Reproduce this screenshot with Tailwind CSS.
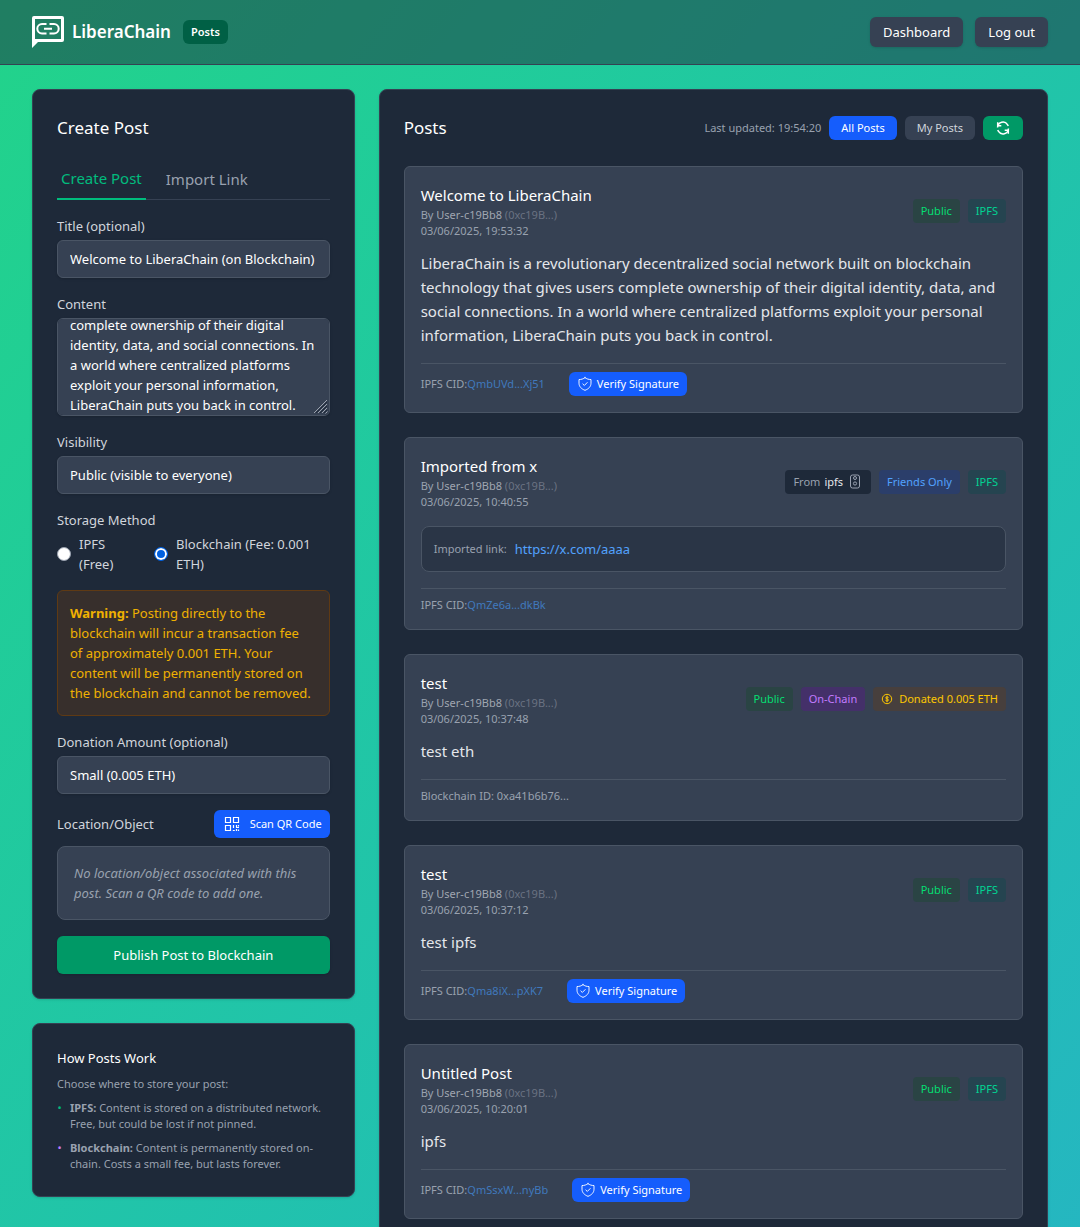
<!DOCTYPE html>
<html lang="en">
<head>
<meta charset="utf-8">
<meta name="viewport" content="width=device-width, initial-scale=1">
<title>LiberaChain – Posts</title>
<script src="https://cdn.jsdelivr.net/npm/@tailwindcss/browser@4"></script>
</head>
<body class="min-h-screen bg-linear-to-br from-[#22d38a] to-[#25b6c1] font-['Noto_Sans','Open_Sans',sans-serif] text-[15px] leading-6 text-white">

<svg class="hidden" aria-hidden="true">
  <symbol id="shield" viewBox="0 0 24 24" fill="none" stroke="currentColor" stroke-width="1.400" stroke-linejoin="round" stroke-linecap="round">
    <path d="M12 2.500c2.600 2 5.600 2.800 9 2.800v5.500c0 5-3.600 8.600-9 10.700-5.400-2.100-9-5.700-9-10.700V5.300c3.400 0 6.400-.8 9-2.800z"/>
    <path d="M8.800 12l2.200 2.200 4.300-4.400"/>
  </symbol>
</svg>

<header class="border-b border-gray-700 bg-gray-800/50">
  <div class="flex h-16 items-center justify-between px-8">
    <div class="flex items-center gap-3">
      <a href="#" class="flex items-center gap-2">
        <svg class="size-8" viewBox="0 0 32 32" fill="none" stroke="#fff">
          <path d="M2 0h28a2 2 0 0 1 2 2v22a2 2 0 0 1-2 2H6l-6 6V2a2 2 0 0 1 2-2zM3 3v20h26V3z" fill="#fff" stroke="none" fill-rule="evenodd"/>
          <path d="M14.500 8H10a4.700 4.700 0 0 0 0 9.400h4.500M17.500 8H22a4.700 4.700 0 0 1 0 9.400h-4.500M12 12.700h8" stroke-width="2"/>
        </svg>
        <span class="text-[17px] font-semibold">LiberaChain</span>
      </a>
      <span class="rounded-md bg-emerald-800 px-2 py-1 text-[11px] leading-4 font-semibold">Posts</span>
    </div>
    <nav class="flex gap-3">
      <button type="button" class="h-[30px] rounded-md bg-gray-700 px-[13px] text-[13px] shadow-sm">Dashboard</button>
      <button type="button" class="h-[30px] rounded-md bg-gray-700 px-[13px] text-[13px] shadow-sm">Log out</button>
    </nav>
  </div>
</header>

<main class="grid grid-cols-3 items-start gap-6 px-8 py-6">

  <aside class="flex flex-col gap-6">
    <section class="rounded-lg border border-gray-700 bg-gray-800 p-6 shadow-sm">
      <h2 class="text-[17px] leading-7">Create Post</h2>
      <div class="mt-6 flex gap-4 border-b border-gray-700">
        <button type="button" class="-mb-px border-b-2 border-emerald-500 px-1 pb-2 text-emerald-500">Create Post</button>
        <button type="button" class="px-1 pb-2 text-gray-400">Import Link</button>
      </div>

      <form class="mt-4 flex flex-col gap-4 text-[13px] leading-5">
        <div class="flex flex-col gap-1">
          <label for="title" class="text-gray-300">Title (optional)</label>
          <input id="title" type="text" value="Welcome to LiberaChain (on Blockchain)" class="w-full rounded-md border border-gray-600 bg-gray-700 px-3 py-2 shadow-sm">
        </div>
        <div class="flex flex-col gap-1">
          <label for="content" class="text-gray-300">Content</label>
          <div class="relative flex">
            <textarea id="content" class="h-[98px] w-full resize-none rounded-md border border-gray-600 bg-gray-700 px-3 pt-2 pb-0 shadow-sm [scrollbar-width:none]">LiberaChain is a revolutionary decentralized social network built on blockchain technology that gives users complete ownership of their digital identity, data, and social connections. In a world where centralized platforms exploit your personal information, LiberaChain puts you back in control.</textarea>
            <svg class="pointer-events-none absolute right-0.5 bottom-0.5 size-3.5" viewBox="0 0 14 14" fill="none" aria-hidden="true">
              <path d="M0 13L13 0M4 13l9-9M8 13l5-5M11.500 13.500l2-2" stroke="#9ca3af"/>
              <path d="M2 13L13 2M6 13l7-7M10 13l3-3" stroke="#1e2939"/>
            </svg>
          </div>
        </div>
        <div class="flex flex-col gap-1">
          <label for="visibility" class="text-gray-300">Visibility</label>
          <select id="visibility" class="w-full appearance-none rounded-md border border-gray-600 bg-gray-700 px-3 py-2 shadow-sm">
            <option>Public (visible to everyone)</option>
            <option>Friends Only</option>
          </select>
        </div>
        <fieldset class="text-gray-300">
          <legend class="mb-1">Storage Method</legend>
          <div class="grid grid-cols-[73px_1fr] gap-6">
            <label class="flex items-center gap-2">
              <input type="radio" name="storage" class="size-[14px] shrink-0 appearance-none rounded-full border border-gray-400 bg-white">
              <span>IPFS (Free)</span>
            </label>
            <label class="flex items-center gap-2">
              <input type="radio" name="storage" checked class="size-[14px] shrink-0 appearance-none rounded-full border border-[#0060df] bg-[#0060df] inset-ring-2 inset-ring-white">
              <span>Blockchain (Fee: 0.001 ETH)</span>
            </label>
          </div>
        </fieldset>
        <p class="rounded-md border border-[#5f3a14] bg-[#372f2c] py-3 pr-4 pl-3 text-yellow-500"><strong class="font-bold">Warning:</strong> Posting directly to the blockchain will incur a transaction fee of approximately 0.001 ETH. Your content will be permanently stored on the blockchain and cannot be removed.</p>
        <div class="flex flex-col gap-1">
          <label for="donation" class="text-gray-300">Donation Amount (optional)</label>
          <select id="donation" class="w-full appearance-none rounded-md border border-gray-600 bg-gray-700 px-3 py-2 shadow-sm">
            <option>Small (0.005 ETH)</option>
          </select>
        </div>
        <div class="flex flex-col gap-2">
          <div class="flex items-center justify-between">
            <span class="text-gray-300">Location/Object</span>
            <button type="button" class="flex h-7 items-center gap-2 rounded-md bg-blue-600 px-2 text-[11px]">
              <svg class="size-5" viewBox="0 0 20 20" fill="none" stroke="currentColor" stroke-width="1.200">
                <path d="M3.500 3.500h5v5h-5zM11.500 3.500h5v5h-5zM3.500 11.500h5v5h-5z"/>
                <path d="M11.500 11v3M14.500 11v2.500M16.500 11v1.500M14 13.500h3M10.800 16.500h2M14.500 15v2M16.500 15.500v1.500"/>
              </svg>
              Scan QR Code
            </button>
          </div>
          <p class="rounded-lg border border-gray-600 bg-gray-700 p-4 text-gray-400 italic">No location/object associated with this post. Scan a QR code to add one.</p>
        </div>
        <button type="submit" class="h-[38px] w-full rounded-md bg-emerald-600 shadow-sm">Publish Post to Blockchain</button>
      </form>
    </section>

    <section class="rounded-lg border border-gray-700 bg-gray-800 p-6 text-[11px] leading-4 text-gray-400 shadow-sm">
      <h3 class="text-[13px] leading-5 text-white">How Posts Work</h3>
      <p class="mt-2">Choose where to store your post:</p>
      <ul class="mt-2 flex flex-col gap-2">
        <li class="flex gap-2"><span class="w-[5px] shrink-0 text-center text-emerald-500">•</span><span><strong class="font-bold">IPFS:</strong> Content is stored on a distributed network. Free, but could be lost if not pinned.</span></li>
        <li class="flex gap-2"><span class="w-[5px] shrink-0 text-center text-purple-400">•</span><span><strong class="font-bold">Blockchain:</strong> Content is permanently stored on-chain. Costs a small fee, but lasts forever.</span></li>
      </ul>
    </section>
  </aside>

  <section class="col-span-2 rounded-lg border border-gray-700 bg-gray-800 p-6 shadow-sm">
    <div class="flex items-center justify-between">
      <h2 class="text-[17px] leading-7">Posts</h2>
      <div class="flex items-center gap-2 text-[11px] leading-4">
        <span class="text-gray-400">Last updated: 19:54:20</span>
        <button type="button" class="rounded-md bg-blue-600 px-3 py-1">All Posts</button>
        <button type="button" class="rounded-md bg-gray-700 px-3 py-1 text-gray-300">My Posts</button>
        <button type="button" aria-label="Refresh posts" class="rounded-md bg-emerald-600 px-3 py-1">
          <svg class="size-4" viewBox="0 0 16 16" fill="none" stroke="currentColor" stroke-width="1.500">
            <path d="M2.600 7.600V7a5.400 5.400 0 0 1 9.900-2.400L13.300 6M13.400 8.400V9a5.400 5.400 0 0 1-9.900 2.400L2.700 10"/>
            <path d="M2.700 2.300v3.400h3.600M13.300 13.700v-3.400H9.700"/>
          </svg>
        </button>
      </div>
    </div>

    <div class="mt-6 flex flex-col gap-6">

      <article class="rounded-md border border-gray-600 bg-gray-700 p-4">
        <div class="flex items-center justify-between text-[11px] leading-4">
          <div class="text-gray-400">
            <h3 class="text-[15px] leading-6 text-white">Welcome to LiberaChain</h3>
            <p>By <span class="text-gray-300/70">User-c19Bb8</span> <span class="text-gray-500">(0xc19B...)</span></p>
            <p>03/06/2025, 19:53:32</p>
          </div>
          <div class="flex gap-2">
            <span class="rounded bg-[#2a4444] px-2 py-1 text-green-400">Public</span>
            <span class="rounded bg-[#254450] px-2 py-1 text-emerald-400">IPFS</span>
          </div>
        </div>
        <p class="mt-3 text-gray-200">LiberaChain is a revolutionary decentralized social network built on blockchain technology that gives users complete ownership of their digital identity, data, and social connections. In a world where centralized platforms exploit your personal information, LiberaChain puts you back in control.</p>
        <div class="mt-4 flex items-center gap-6 border-t border-gray-600 pt-2 text-[11px] leading-4">
          <span class="text-gray-400">IPFS CID:<a href="#" class="text-[#4079bd]">QmbUVd...Xj51</a></span>
          <button type="button" class="flex items-center gap-1 rounded-md bg-blue-600 px-2 py-1"><svg class="size-4"><use href="#shield"/></svg>Verify Signature</button>
        </div>
      </article>

      <article class="rounded-md border border-gray-600 bg-gray-700 p-4">
        <div class="flex items-center justify-between text-[11px] leading-4">
          <div class="text-gray-400">
            <h3 class="text-[15px] leading-6 text-white">Imported from x</h3>
            <p>By <span class="text-gray-300/70">User-c19Bb8</span> <span class="text-gray-500">(0xc19B...)</span></p>
            <p>03/06/2025, 10:40:55</p>
          </div>
          <div class="flex gap-2">
            <span class="flex items-center gap-1 rounded bg-gray-800 px-2 py-1 text-gray-400">From <span class="text-gray-200">ipfs</span>
              <svg class="size-4" viewBox="0 0 16 16" fill="none" stroke="currentColor">
                <rect x="3.500" y="1" width="9" height="13" rx="2"/>
                <circle cx="8" cy="4" r="1.500"/><circle cx="8" cy="9.500" r="1.600"/>
              </svg>
            </span>
            <span class="rounded bg-blue-900/40 px-2 py-1 text-blue-400">Friends Only</span>
            <span class="rounded bg-[#254450] px-2 py-1 text-emerald-400">IPFS</span>
          </div>
        </div>
        <div class="mt-4 flex items-center gap-2 rounded-lg border border-gray-600 bg-gray-800/50 p-3 leading-5">
          <span class="text-[11px] text-gray-400">Imported link:</span>
          <a href="#" class="text-[13px] text-blue-400">https://x.com/aaaa</a>
        </div>
        <div class="mt-4 flex items-center gap-6 border-t border-gray-600 pt-2 text-[11px] leading-4">
          <span class="text-gray-400">IPFS CID:<a href="#" class="text-[#4079bd]">QmZe6a...dkBk</a></span>
        </div>
      </article>

      <article class="rounded-md border border-gray-600 bg-gray-700 p-4">
        <div class="flex items-center justify-between text-[11px] leading-4">
          <div class="text-gray-400">
            <h3 class="text-[15px] leading-6 text-white">test</h3>
            <p>By <span class="text-gray-300/70">User-c19Bb8</span> <span class="text-gray-500">(0xc19B...)</span></p>
            <p>03/06/2025, 10:37:48</p>
          </div>
          <div class="flex gap-2">
            <span class="rounded bg-[#2a4444] px-2 py-1 text-green-400">Public</span>
            <span class="rounded bg-purple-900/40 px-2 py-1 text-purple-400">On-Chain</span>
            <span class="flex items-center gap-1.5 rounded bg-[#473f3d] px-2 py-1 text-yellow-400">
              <svg class="size-3" viewBox="0 0 12 12" fill="none" stroke="currentColor">
                <circle cx="6" cy="6" r="4.700"/>
                <path d="M7.500 4.500c-.6-.7-2.900-.7-2.900.4s2.900.9 2.900 2.100-2.400 1.200-3 .3M6 2.800v6.400"/>
              </svg>
              Donated 0.005 ETH</span>
          </div>
        </div>
        <p class="mt-3 text-gray-200">test eth</p>
        <div class="mt-4 border-t border-gray-600 pt-2 text-[11px] leading-4 text-gray-400">Blockchain ID: 0xa41b6b76...</div>
      </article>

      <article class="rounded-md border border-gray-600 bg-gray-700 p-4">
        <div class="flex items-center justify-between text-[11px] leading-4">
          <div class="text-gray-400">
            <h3 class="text-[15px] leading-6 text-white">test</h3>
            <p>By <span class="text-gray-300/70">User-c19Bb8</span> <span class="text-gray-500">(0xc19B...)</span></p>
            <p>03/06/2025, 10:37:12</p>
          </div>
          <div class="flex gap-2">
            <span class="rounded bg-[#2a4444] px-2 py-1 text-green-400">Public</span>
            <span class="rounded bg-[#254450] px-2 py-1 text-emerald-400">IPFS</span>
          </div>
        </div>
        <p class="mt-3 text-gray-200">test ipfs</p>
        <div class="mt-4 flex items-center gap-6 border-t border-gray-600 pt-2 text-[11px] leading-4">
          <span class="text-gray-400">IPFS CID:<a href="#" class="text-[#4079bd]">Qma8iX...pXK7</a></span>
          <button type="button" class="flex items-center gap-1 rounded-md bg-blue-600 px-2 py-1"><svg class="size-4"><use href="#shield"/></svg>Verify Signature</button>
        </div>
      </article>

      <article class="rounded-md border border-gray-600 bg-gray-700 p-4">
        <div class="flex items-center justify-between text-[11px] leading-4">
          <div class="text-gray-400">
            <h3 class="text-[15px] leading-6 text-white">Untitled Post</h3>
            <p>By <span class="text-gray-300/70">User-c19Bb8</span> <span class="text-gray-500">(0xc19B...)</span></p>
            <p>03/06/2025, 10:20:01</p>
          </div>
          <div class="flex gap-2">
            <span class="rounded bg-[#2a4444] px-2 py-1 text-green-400">Public</span>
            <span class="rounded bg-[#254450] px-2 py-1 text-emerald-400">IPFS</span>
          </div>
        </div>
        <p class="mt-3 text-gray-200">ipfs</p>
        <div class="mt-4 flex items-center gap-6 border-t border-gray-600 pt-2 text-[11px] leading-4">
          <span class="text-gray-400">IPFS CID:<a href="#" class="text-[#4079bd]">QmSsxW...nyBb</a></span>
          <button type="button" class="flex items-center gap-1 rounded-md bg-blue-600 px-2 py-1"><svg class="size-4"><use href="#shield"/></svg>Verify Signature</button>
        </div>
      </article>

    </div>
  </section>
</main>

<script>
  // Start with the end of the draft in view.
  const content = document.getElementById('content');
  const showEnd = () => { content.scrollTop = content.scrollHeight; };
  showEnd();
  window.addEventListener('load', showEnd);
</script>
</body>
</html>
